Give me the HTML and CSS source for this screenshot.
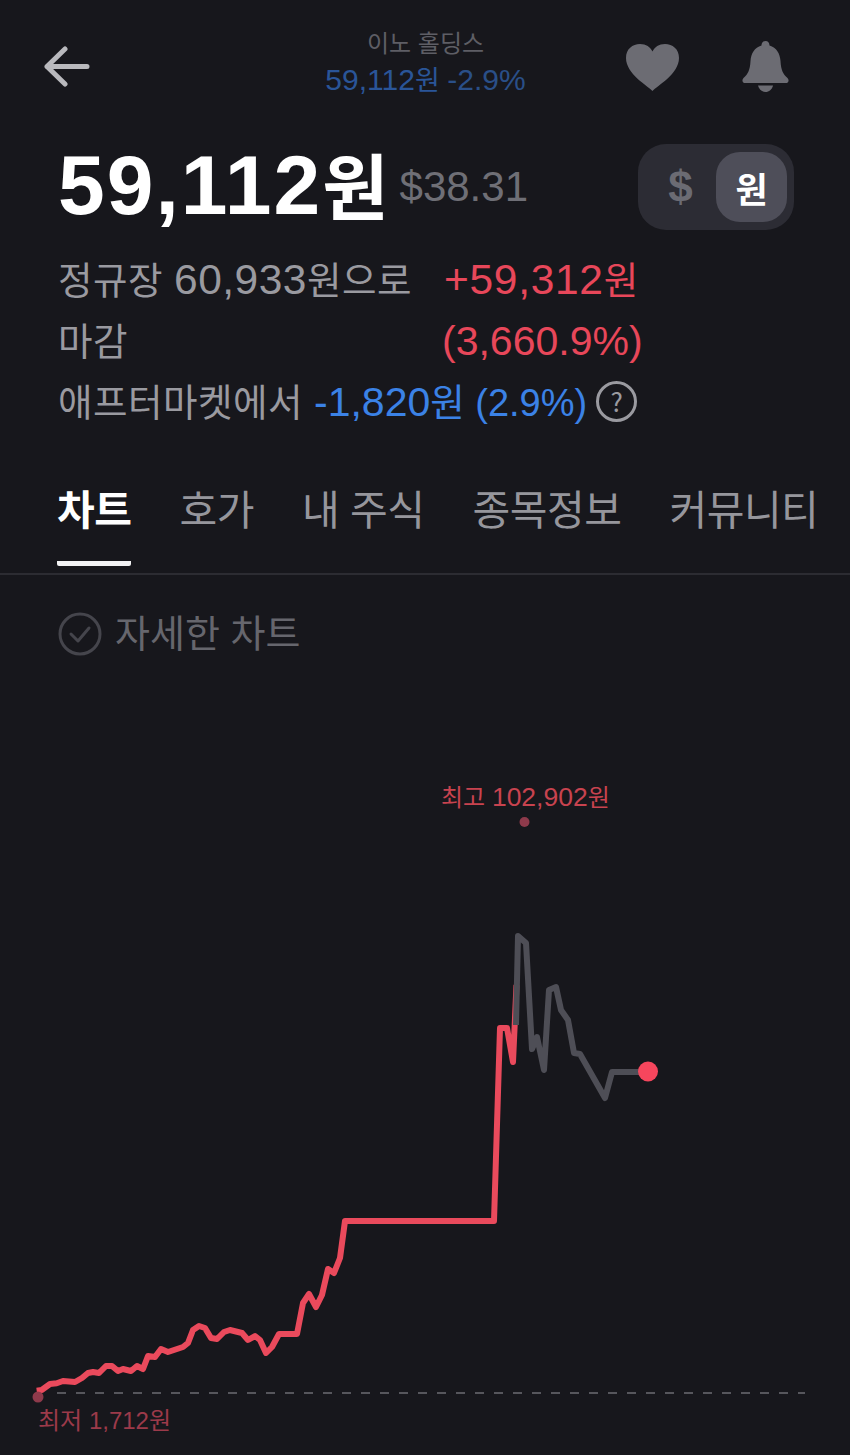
FILE: index.html
```html
<!DOCTYPE html>
<html lang="ko">
<head>
<meta charset="utf-8">
<title>이노 홀딩스</title>
<link rel="stylesheet" href="styles.css">
</head>
<body>
<div class="page">
  <header class="topbar">
    <svg class="back" viewBox="0 0 46 41" width="46" height="41"><path d="M21 3 L3 20.500 L21 38 M3 20.500 H43" fill="none" stroke="#b9b9bd" stroke-width="5" stroke-linecap="round" stroke-linejoin="round"/></svg>
    <div class="title">
      <div class="title-name">이노 홀딩스</div>
      <div class="title-price"><span class="n">59,112</span>원 <span class="n title-pct">-2.9%</span></div>
    </div>
    <div class="top-icons">
      <svg class="heart" viewBox="0 0 53 47" width="53" height="47"><path d="M26.500 47 C22 42 0 30 0 14 C0 5 6.500 0 14 0 C20 0 24.500 3 26.500 7.500 C28.500 3 33 0 39 0 C46.500 0 53 5 53 14 C53 30 31 42 26.500 47 Z" fill="#6c6c73"/></svg>
      <svg viewBox="0 0 47 51" width="47" height="51"><path d="M23.500 0 C26 0 27.500 2 27.500 4.500 C34.500 6.500 38 12.500 38.500 20 C39 29 41 33 45.500 37 C47.500 39 46.500 42 44 42 H3 C0.500 42 -0.500 39 1.500 37 C6 33 8 29 8.500 20 C9 12.500 12.500 6.500 19.500 4.500 C19.500 2 21 0 23.500 0 Z" fill="#6c6c73"/><path d="M16 44.500 H31 C30 48.500 27 51 23.500 51 C20 51 17 48.500 16 44.500 Z" fill="#6c6c73"/></svg>
    </div>
  </header>

  <section class="price-row">
    <div class="price-main">
      <span class="price"><span class="price-num">59,112</span>원</span>
      <span class="price-usd">$38.31</span>
    </div>
    <div class="toggle">
      <span class="toggle-off">$</span>
      <span class="toggle-on">원</span>
    </div>
  </section>

  <section class="changes">
    <span class="label">정규장 <span class="n">60,933</span>원으로</span><span class="up"><span class="n">+59,312</span>원</span>
    <span class="label">마감</span><span class="up up-pct"><span class="n">(3,660.9%)</span></span>
    <div class="after">
      <span class="label">애프터마켓에서</span>
      <span class="down"><span class="n down-num">-1,820</span>원 <span class="n down-pct">(2.9%)</span></span>
      <span class="help">?</span>
    </div>
  </section>

  <nav class="tabs">
    <div class="tab tab-active">차트</div>
    <div class="tab">호가</div>
    <div class="tab">내 주식</div>
    <div class="tab">종목정보</div>
    <div class="tab">커뮤니티</div>
  </nav>

  <div class="detail">
    <svg viewBox="0 0 44 44" width="44" height="44"><circle cx="22" cy="22" r="20" fill="none" stroke="#45454c" stroke-width="3"/><path d="M13 22 L20 29 L31 16" fill="none" stroke="#45454c" stroke-width="3" stroke-linecap="round" stroke-linejoin="round"/></svg>
    <span class="detail-text">자세한 차트</span>
  </div>

  <svg class="chart" viewBox="0 690 850 765" width="850" height="765">
    <text class="chart-high" x="441" y="806">최고 <tspan class="chart-n">102,902</tspan>원</text>
    <circle cx="524.500" cy="822" r="5" fill="#8e3a4b"/>
    <line x1="57" y1="1393" x2="805" y2="1393" stroke="#56565c" stroke-width="2" stroke-dasharray="9 10"/>
    <polyline class="line-red" points="36.700,1390.700 41.700,1390 50,1384 56.700,1383.300 63,1381 75,1382 82,1378 88,1373 93,1372 99,1373 106,1366 112,1366 118,1371 123,1369 131,1371 137,1366 143,1369 148,1356 155,1357 161,1349 168,1352 183,1347 188,1343 193,1330 199,1326 205,1328 211,1338 217,1339 224,1332 230,1330 242,1333 248,1340 255,1336 260,1340 266,1353 272,1347 279,1334 297,1334 303,1303 309,1294 316,1307 322,1295 328,1269 334,1273 340,1258 345,1221 494,1221 500,1028 507,1028 513,1062 516.500,985"/>
    <polyline class="line-gray" points="516,1025 518,936 526,943 532,1049 537,1037 544,1070 549,990 556,987 561,1010 568,1020 574,1053 580,1054 605,1098 612,1072 647,1072"/>
    <circle cx="38" cy="1397" r="5.500" fill="#8e3a4b"/>
    <text class="chart-low" x="38" y="1429">최저 <tspan class="chart-n-low">1,712</tspan>원</text>
    <circle cx="648" cy="1071.500" r="10" fill="#f6465d"/>
  </svg>
</div>
</body>
</html>
```
FILE: styles.css
```css
* { box-sizing: border-box; }
html, body { margin: 0; padding: 0; }
body {
  background: #17171c;
  font-family: "Liberation Sans", "Noto Sans CJK KR", sans-serif;
  color: #fff;
}
.page { width: 850px; height: 1455px; overflow: hidden; display: flex; flex-direction: column; }

.topbar {
  height: 148px;
  padding: 26px 61px 0 44px;
  display: grid;
  grid-template-columns: 1fr auto 1fr;
  align-items: start;
}
.back { margin-top: 20px; }
.title { text-align: center; margin-left: 18px; }
.title-name { font-family: "Noto Sans CJK KR", sans-serif; font-size: 24px; line-height: 31px; color: #5e5e65; }
.title-price { font-size: 27px; line-height: 44px; color: #2a5598; white-space: nowrap; font-family: "Noto Sans CJK KR", sans-serif; }
.title-price .n { font-family: "Liberation Sans", sans-serif; font-size: 30px; }
.title-price .title-pct { color: #2a4f88; }
.top-icons { display: flex; justify-content: flex-end; align-items: flex-start; gap: 63px; padding-top: 15px; }
.heart { margin-top: 3px; }

.price-row {
  height: 86px;
  padding: 0 56px 0 58px;
  display: flex;
  justify-content: space-between;
  align-items: center;
}
.price-main { display: flex; align-items: center; gap: 11px; }
.price { font-size: 72px; font-weight: 700; line-height: 86px; margin-bottom: 6px; font-family: "Noto Sans CJK KR", sans-serif; white-space: nowrap; }
.price-num { font-family: "Liberation Sans", sans-serif; font-size: 84px; letter-spacing: 2px; }
.price-usd { font-size: 42px; color: #6f6f76; }
.toggle {
  width: 156px; height: 86px;
  background: #2c2c34;
  border-radius: 28px;
  padding: 8px 7px 8px 0;
  display: flex;
  align-items: center;
  justify-content: space-between;
}
.toggle-off { width: 78px; padding-left: 7px; text-align: center; font-size: 44px; font-weight: 700; color: #6b6b73; }
.toggle-on {
  width: 71px; height: 70px;
  background: #4e4e59;
  border-radius: 24px;
  display: flex; align-items: center; justify-content: center;
  font-family: "Noto Sans CJK KR", sans-serif;
  font-size: 35px; font-weight: 700; color: #fff;
}

.changes {
  padding: 17px 0 0 58px;
  display: grid;
  grid-template-columns: 386px 1fr;
  grid-auto-rows: 61px;
  font-family: "Noto Sans CJK KR", sans-serif;
  font-size: 37.500px;
  line-height: 61px;
}
.changes .n { font-family: "Liberation Sans", sans-serif; font-size: 42.500px; line-height: 1; }
.label { color: #9a9aa0; white-space: nowrap; letter-spacing: 0.5px; }
.up { color: #e8475a; white-space: nowrap; letter-spacing: 0.7px; }
.up-pct { margin-left: -2px; letter-spacing: 0; }
.changes .up-pct .n { font-size: 41px; }
.after { grid-column: 1 / 3; display: flex; align-items: center; gap: 9px; height: 61px; }
.label + .down { margin-left: 2px; }
.down { color: #3b82e6; white-space: nowrap; }
.changes .down-num { font-size: 41px; }
.changes .down-pct { font-size: 38px; }
.help {
  width: 41px; height: 41px;
  border: 3px solid #9a9aa0;
  border-radius: 50%;
  color: #9a9aa0;
  font-size: 26px;
  line-height: 34px;
  text-align: center;
  margin-top: 4px;
}

.tabs {
  margin-top: 42px;
  height: 106px;
  padding: 0 0 0 57px;
  display: flex;
  gap: 48px;
  border-bottom: 2px solid #2c2c32;
  font-family: "Noto Sans CJK KR", sans-serif;
}
.tab { font-size: 41px; line-height: 70px; color: #96969c; letter-spacing: -0.5px; white-space: nowrap; }
.tab-active { color: #fff; font-weight: 700; border-bottom: 5px solid #f2f2f4; height: 94px; border-radius: 0 0 2px 2px; }

.detail {
  height: 118px;
  padding: 37px 0 0 58px;
  display: flex;
  align-items: flex-start;
  gap: 13px;
  font-family: "Noto Sans CJK KR", sans-serif;
  font-size: 38px;
  line-height: 44px;
  color: #66666d;
}
.detail-text { margin-top: -3px; }
.chart { display: block; flex: none; }
.chart-high, .chart-low { font-size: 24px; font-family: "Noto Sans CJK KR", sans-serif; }
.chart-n { font-family: "Liberation Sans", sans-serif; font-size: 26.500px; }
.chart-n-low { font-family: "Liberation Sans", sans-serif; font-size: 24px; }
.chart-high { fill: #c8434f; }
.chart-low { fill: #9c3a4a; }
.line-red, .line-gray { fill: none; stroke-width: 6; stroke-linejoin: round; }
.line-red { stroke: #ea4a5c; }
.line-gray { stroke: #4e4e56; }
```
